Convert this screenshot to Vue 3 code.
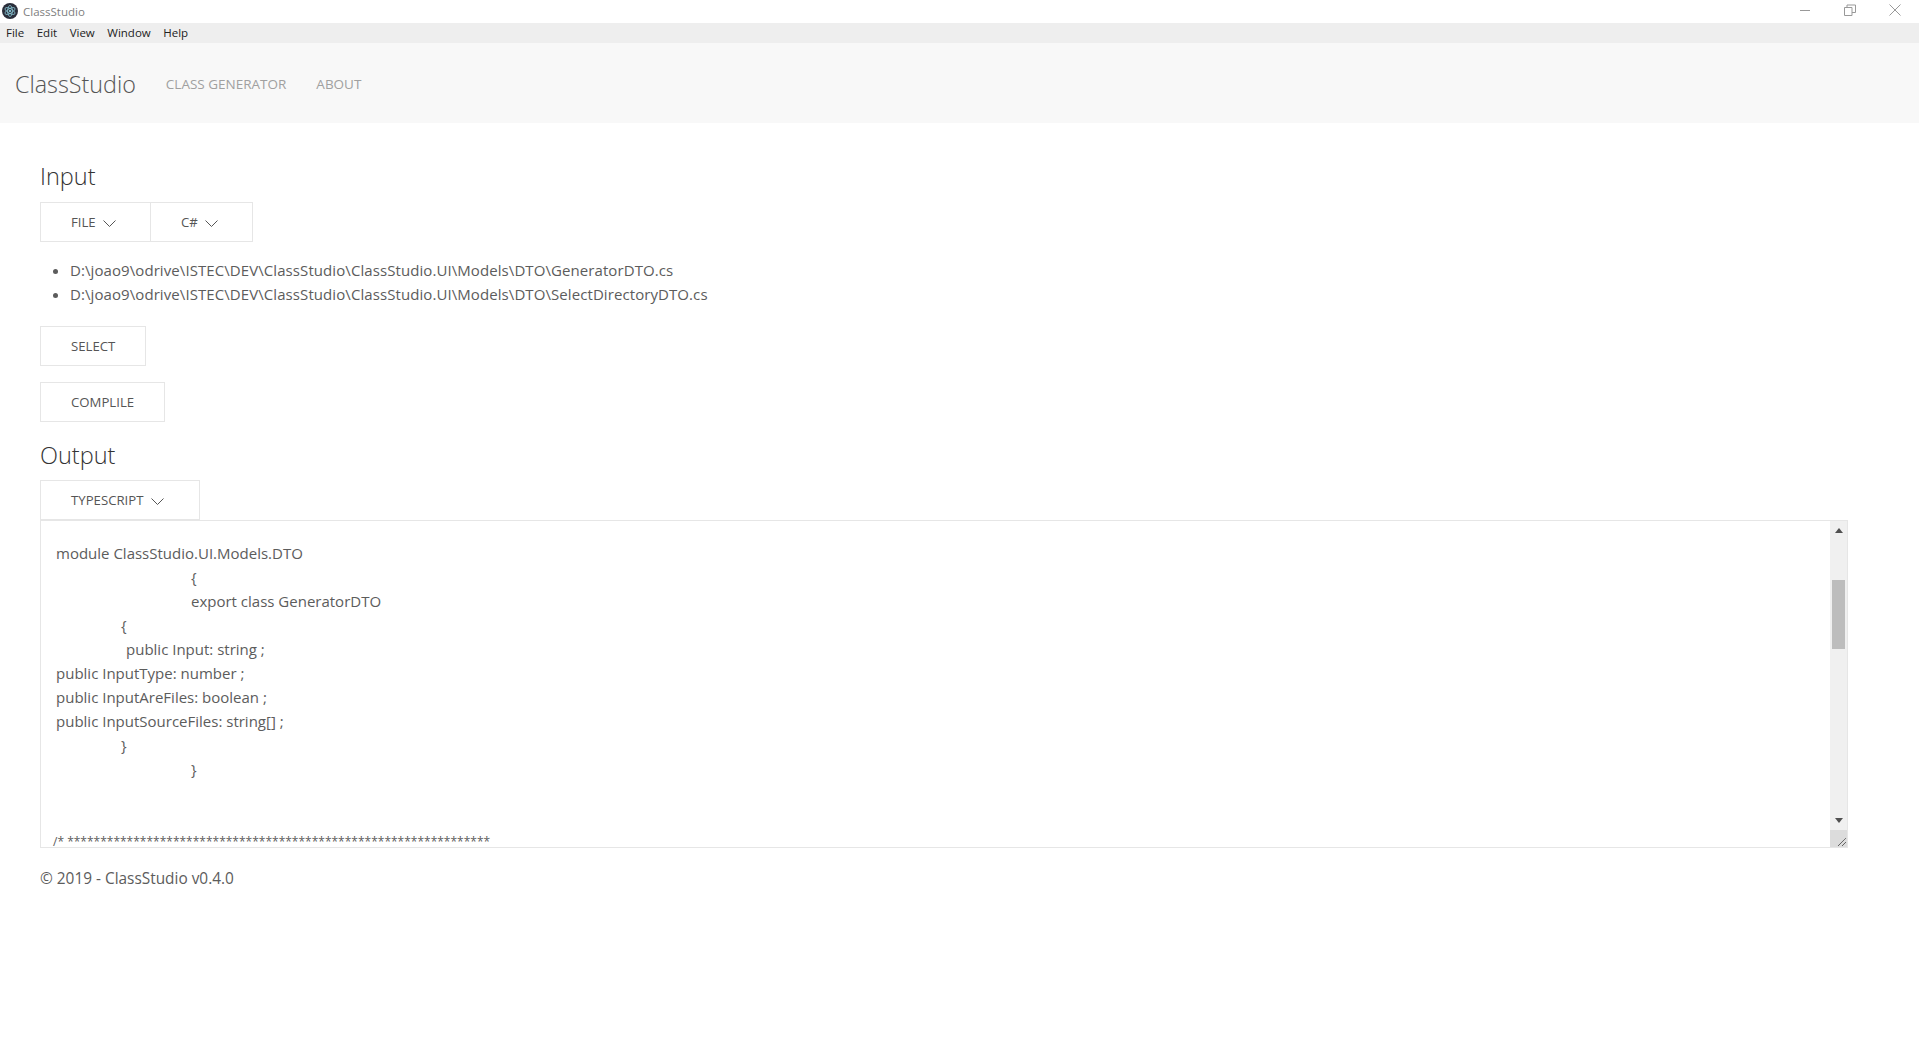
<script setup>
const menus = ['File', 'Edit', 'View', 'Window', 'Help']
const files = [
  'D:\\joao9\\odrive\\ISTEC\\DEV\\ClassStudio\\ClassStudio.UI\\Models\\DTO\\GeneratorDTO.cs',
  'D:\\joao9\\odrive\\ISTEC\\DEV\\ClassStudio\\ClassStudio.UI\\Models\\DTO\\SelectDirectoryDTO.cs'
]
const code = [
  { t: 'module ClassStudio.UI.Models.DTO', c: '' },
  { t: '{', c: 'far' },
  { t: 'export class GeneratorDTO', c: 'far' },
  { t: '{', c: 'mid' },
  { t: 'public Input: string ;', c: 'mid2' },
  { t: 'public InputType: number ;', c: '' },
  { t: 'public InputAreFiles: boolean ;', c: '' },
  { t: 'public InputSourceFiles: string[] ;', c: '' },
  { t: '}', c: 'mid' },
  { t: '}', c: 'far' },
  { t: '\u00a0', c: '' },
  { t: '\u00a0', c: '' },
  { t: '/* ' + '*'.repeat(64), c: 'cm' }
]
</script>

<template>
  <div class="app">
    <div class="titlebar">
      <svg class="appicon" viewBox="0 0 16 16" width="16" height="16">
        <circle cx="8" cy="8" r="8" fill="#2b2e3b" />
        <g fill="none" stroke="#9feaf9" stroke-width=".6">
          <ellipse cx="8" cy="8" rx="5.6" ry="2.3" transform="rotate(30 8 8)" />
          <ellipse cx="8" cy="8" rx="5.6" ry="2.3" transform="rotate(90 8 8)" />
          <ellipse cx="8" cy="8" rx="5.6" ry="2.3" transform="rotate(150 8 8)" />
        </g>
        <circle cx="8" cy="8" r="1" fill="#9feaf9" />
      </svg>
      <span class="apptitle">ClassStudio</span>
      <div class="winbtns">
        <svg width="12" height="12" viewBox="0 0 12 12"><path d="M1 6.500h10" stroke="#999" fill="none" /></svg>
        <svg width="12" height="12" viewBox="0 0 12 12"><path d="M.5 3.500h7.500v8h-7.500zM3 3.500v-2.500h8.500v7.500h-3.500" stroke="#999" fill="none" /></svg>
        <svg width="12" height="12" viewBox="0 0 12 12"><path d="M.5.5l11 11M11.500.5l-11 11" stroke="#999" fill="none" /></svg>
      </div>
    </div>
    <div class="menubar">
      <span v-for="m in menus" :key="m">{{ m }}</span>
    </div>
    <nav class="navbar">
      <span class="brand">ClassStudio</span>
      <span class="navlink">CLASS GENERATOR</span>
      <span class="navlink">ABOUT</span>
    </nav>
    <main class="content">
      <h2>Input</h2>
      <div class="btngroup">
        <button class="btn w-file">FILE <svg class="chev" viewBox="0 0 13 7" width="13" height="7"><path d="M.5.5l6 6 6-6" /></svg></button>
        <button class="btn w-lang">C# <svg class="chev" viewBox="0 0 13 7" width="13" height="7"><path d="M.5.5l6 6 6-6" /></svg></button>
      </div>
      <ul class="files">
        <li v-for="f in files" :key="f">{{ f }}</li>
      </ul>
      <button class="btn block w-select">SELECT</button>
      <button class="btn block w-compile">COMPLILE</button>
      <h2 class="out">Output</h2>
      <button class="btn tab w-ts">TYPESCRIPT <svg class="chev" viewBox="0 0 13 7" width="13" height="7"><path d="M.5.5l6 6 6-6" /></svg></button>
      <div class="output">
        <div class="code">
          <div v-for="(l, i) in code" :key="i" class="line" :class="l.c">{{ l.t }}</div>
        </div>
        <div class="scroll">
          <svg class="arrow up" width="8" height="5" viewBox="0 0 8 5"><path d="M4 0l4 5H0z" fill="#505050" /></svg>
          <div class="thumb"></div>
          <svg class="arrow down" width="8" height="5" viewBox="0 0 8 5"><path d="M0 0h8L4 5z" fill="#505050" /></svg>
          <div class="corner">
            <svg width="17" height="17" viewBox="0 0 17 17"><path d="M8 16l8-8M12 16l4-4" stroke="#333" stroke-dasharray="1 .5" fill="none" /></svg>
          </div>
        </div>
      </div>
      <footer>© 2019 - ClassStudio v0.4.0</footer>
    </main>
  </div>
</template>

<style>
html, body { margin: 0; background: #fff; }
</style>

<style scoped>
.app { width: 1919px; height: 1040px; overflow: hidden; font-family: "Open Sans", "Noto Sans", sans-serif; color: #5c5c5c; background: #fff; }
.titlebar { height: 23px; display: flex; align-items: center; padding-left: 2px; background: #fff; }
.appicon { margin-top: -1px; }
.apptitle { margin-left: 5px; font-size: 11.500px; color: #808080; }
.winbtns { margin-left: auto; margin-right: 18px; display: flex; gap: 33px; align-items: center; margin-top: -4px; }
.menubar { height: 20px; background: #eee; display: flex; align-items: center; gap: 12.500px; padding: 0 0 2px 6px; box-sizing: border-box; font-size: 11.500px; color: #222; }
.navbar { height: 80px; background: #f8f8f8; display: flex; align-items: center; padding: 2px 0 0 15px; box-sizing: border-box; }
.brand { font-size: 23.300px; font-weight: 300; color: #555; margin-right: 30px; }
.navlink { font-size: 13.500px; color: #a0a0a0; margin-right: 30px; }
.content { padding: 0 40px; }
h2 { margin: 0; font-weight: 300; font-size: 23.500px; color: #333; line-height: 30px; padding-top: 38px; height: 41px; box-sizing: content-box; }
.out { padding-top: 18px; height: 40px; }
.btngroup { display: flex; }
.btn { display: flex; align-items: center; height: 40px; box-sizing: border-box; background: #fff; border: 1px solid #e6e6e6; padding: 0 0 0 30px; font: inherit; font-size: 13.200px; color: #555; }
.chev { fill: none; stroke: #555; stroke-width: 1; margin-left: 7px; margin-top: 2px; }
.w-ts .chev { margin-left: 8px; }
.block { display: block; text-align: left; }
.w-file { width: 111px; }
.w-lang { width: 103px; margin-left: -1px; padding-left: 30px; }
.w-select { width: 106px; margin-top: 20px; }
.w-compile { width: 125px; margin-top: 16px; }
.w-ts { width: 160px; }
.files { margin: 16px 0 0; padding: 0 0 0 30px; font-size: 15px; letter-spacing: .08px; line-height: 24px; }
.output { position: relative; height: 328px; width: 1808px; box-sizing: border-box; border: 1px solid #e6e6e6; overflow: hidden; }
.code { padding: 20px 15px 0; font-size: 15px; line-height: 24px; white-space: pre; }
.far { padding-left: 135px; }
.mid { padding-left: 65px; }
.mid2 { padding-left: 70px; }
.cm { margin-left: -3px; font-size: 12px; line-height: 24px; position: relative; top: 1px; }
.scroll { position: absolute; top: 0; right: 0; bottom: 0; width: 17px; background: #f0f0f0; }
.arrow { position: absolute; left: 5px; }
.up { top: 7px; }
.down { bottom: 24px; }
.thumb { position: absolute; top: 59px; left: 2px; width: 13px; height: 69px; background: #bdbdbd; }
.corner { position: absolute; left: 0; right: 0; bottom: 0; height: 17px; background: #dcdcdc; }
.corner svg { display: block; }
footer { margin-top: 21px; font-size: 15.400px; line-height: 20px; }
</style>
